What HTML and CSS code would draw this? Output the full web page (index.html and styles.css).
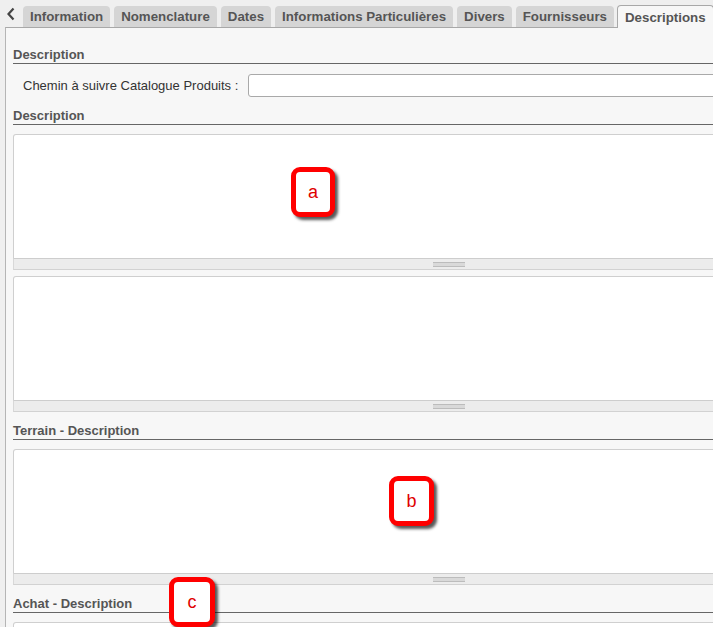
FILE: index.html
```html
<!DOCTYPE html>
<html lang="fr">
<head>
<meta charset="utf-8">
<title>Descriptions</title>
<link rel="stylesheet" href="styles.css">
</head>
<body>
<div class="page">
  <div class="tabbar">
    <span class="nav-arrow">
      <svg width="10" height="14" viewBox="0 0 10 14"><path d="M7.5 1.5 L2.5 7 L7.5 12.5" fill="none" stroke="#444" stroke-width="2.2"/></svg>
    </span>
    <div class="tab">Information</div>
    <div class="tab">Nomenclature</div>
    <div class="tab">Dates</div>
    <div class="tab">Informations Particulières</div>
    <div class="tab">Divers</div>
    <div class="tab">Fournisseurs</div>
    <div class="tab active">Descriptions</div>
  </div>
  <div class="panel">
    <h3 class="section first">Description</h3>
    <div class="field-row">
      <label class="field-label">Chemin à suivre Catalogue Produits :</label>
      <div class="text-input"></div>
    </div>
    <h3 class="section">Description</h3>
    <div class="editor">
      <div class="area"></div>
      <div class="resize-bar"><span class="grip"></span></div>
    </div>
    <div class="editor">
      <div class="area"></div>
      <div class="resize-bar"><span class="grip"></span></div>
    </div>
    <h3 class="section">Terrain - Description</h3>
    <div class="editor">
      <div class="area"></div>
      <div class="resize-bar"><span class="grip"></span></div>
    </div>
    <h3 class="section">Achat - Description</h3>
    <div class="editor">
      <div class="area"></div>
      <div class="resize-bar"><span class="grip"></span></div>
    </div>
  </div>
  <div class="callout callout-a">a</div>
  <div class="callout callout-b">b</div>
  <div class="callout callout-c">c</div>
</div>
</body>
</html>
```

FILE: styles.css
```css
html, body {
  margin: 0;
  padding: 0;
}
body {
  background: #efefef;
  font-family: "Liberation Sans", Arial, sans-serif;
  overflow: hidden;
  width: 713px;
  height: 627px;
}
.page {
  position: relative;
  width: 1000px;
}
.tabbar {
  display: flex;
  align-items: flex-end;
  height: 27px;
  padding-left: 6px;
  gap: 4px;
}
.nav-arrow {
  display: flex;
  align-items: center;
  width: 13px;
  height: 22px;
  align-self: flex-start;
  margin-top: 3px;
}
.tab {
  height: 21px;
  line-height: 22px;
  padding: 0 7px;
  background: #d5d5d5;
  color: #555;
  font-weight: bold;
  font-size: 13.3px;
  border-radius: 4px 4px 0 0;
  box-sizing: border-box;
  white-space: nowrap;
}
.tab.active {
  height: 23px;
  margin-bottom: -1px;
  margin-left: -1px;
  background: #f7f7f7;
  border: 1px solid #a8a8a8;
  border-bottom: none;
  line-height: 23px;
  padding: 0 7px;
  position: relative;
  z-index: 1;
}
.panel {
  margin-left: 5px;
  border-left: 1px solid #b5b5b5;
  border-top: 1px solid #a8a8a8;
  background: #f7f7f7;
  padding-left: 7px;
  padding-bottom: 40px;
}
.section {
  margin: 11px 0 0 0;
  font-size: 13px;
  font-weight: bold;
  color: #555;
  line-height: 16px;
  height: 16px;
  border-bottom: 1px solid #666;
}
.section.first {
  margin-top: 19px;
}
.field-row {
  display: flex;
  align-items: center;
  margin-top: 10px;
  padding-left: 10px;
  gap: 10px;
}
.field-label {
  font-size: 13px;
  color: #333;
}
.text-input {
  flex: 1;
  height: 23px;
  box-sizing: border-box;
  background: #fff;
  border: 1px solid #a9a9a9;
  border-radius: 3px;
}
.editor {
  margin-top: 9px;
}
.editor + .editor {
  margin-top: 6px;
}
.area {
  height: 124px;
  box-sizing: border-box;
  background: #fff;
  border: 1px solid #cfcfcf;
  border-bottom: none;
  border-top-left-radius: 3px;
}
.resize-bar {
  height: 12px;
  box-sizing: border-box;
  background: #ececec;
  border-top: 1px solid #cdcdcd;
  border-bottom: 1px solid #d2d2d2;
  border-left: 1px solid #d8d8d8;
  display: flex;
  justify-content: flex-start;
  padding-left: 419px;
  align-items: center;
}
.grip {
  display: block;
  width: 32px;
  height: 5px;
  box-sizing: border-box;
  border-top: 1px solid #bcbcbc;
  border-bottom: 1px solid #bcbcbc;
  background: #d9d9d9;
}
.callout {
  position: absolute;
  box-sizing: border-box;
  width: 44px;
  height: 50px;
  border: 5px solid #ff0000;
  border-radius: 9px;
  background: #fff;
  color: #e00000;
  font-size: 18px;
  display: flex;
  align-items: center;
  justify-content: center;
  box-shadow: 3px 3px 3px rgba(0, 0, 0, 0.65);
  z-index: 5;
}
.callout-a { left: 291px; top: 167px; }
.callout-b { left: 389px; top: 476px; width: 45px; }
.callout-c { left: 169px; top: 577px; width: 46px; }
```
